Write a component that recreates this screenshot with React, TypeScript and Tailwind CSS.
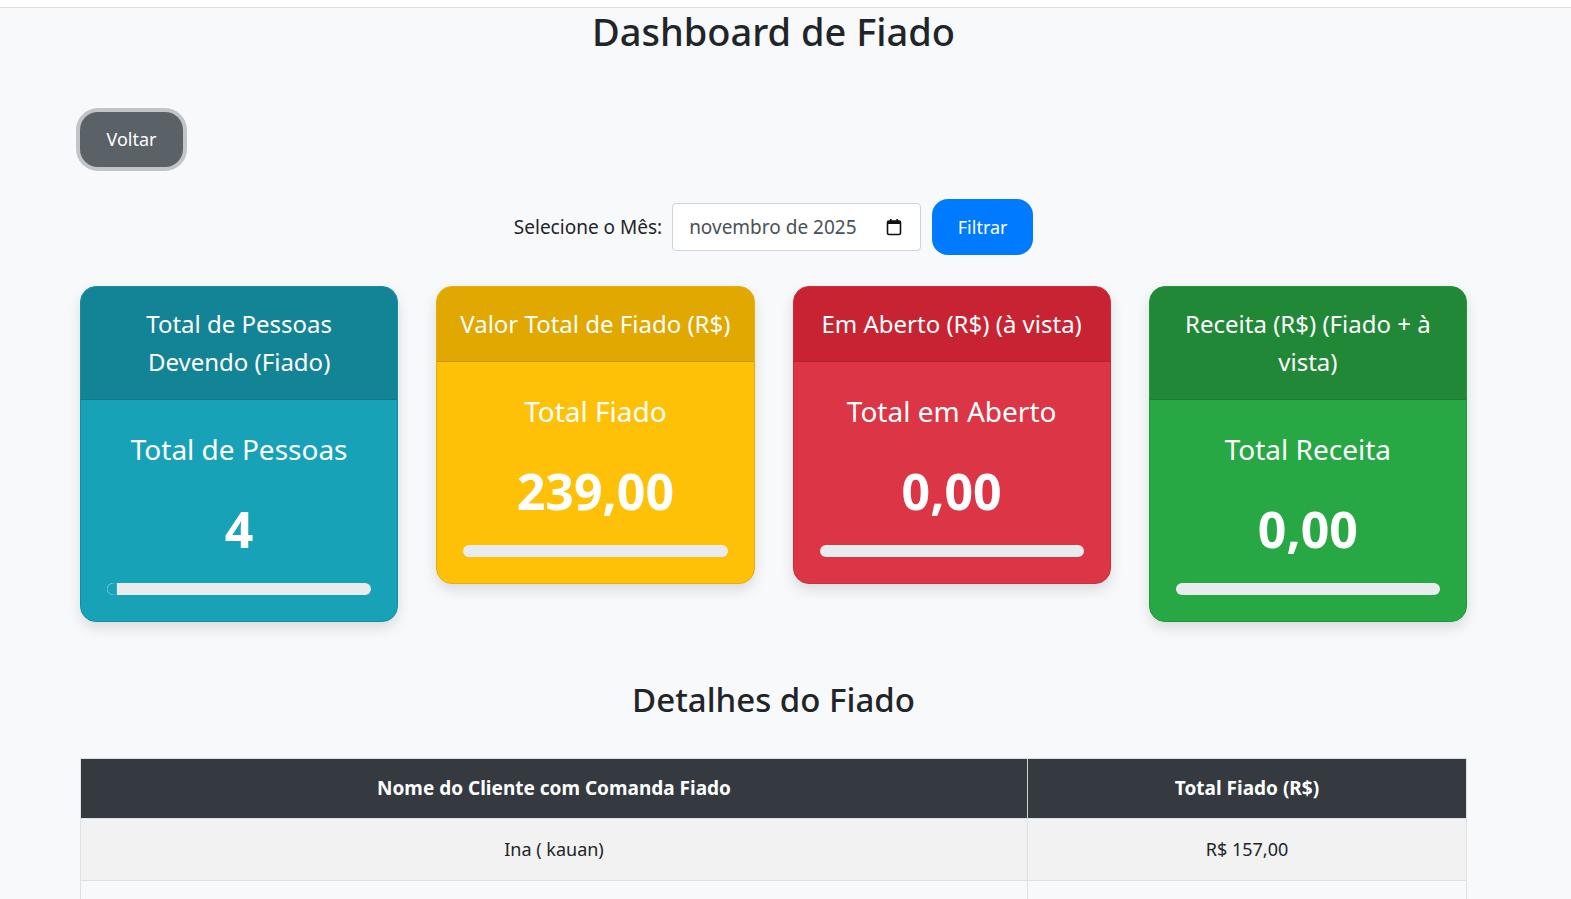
import React from "react";

type Card = {
  header: string;
  title: string;
  value: string;
  headerBg: string;
  bodyBg: string;
  border: string;
  fill?: string;
};

const cards: Card[] = [
  {
    header: "Total de Pessoas Devendo (Fiado)",
    title: "Total de Pessoas",
    value: "4",
    headerBg: "bg-[#138496]",
    bodyBg: "bg-[#17a2b8]",
    border: "border-[#148ea1]",
    fill: "bg-[#17a2b8]",
  },
  {
    header: "Valor Total de Fiado (R$)",
    title: "Total Fiado",
    value: "239,00",
    headerBg: "bg-[#e0a800]",
    bodyBg: "bg-[#ffc107]",
    border: "border-[#e6ad06]",
  },
  {
    header: "Em Aberto (R$) (à vista)",
    title: "Total em Aberto",
    value: "0,00",
    headerBg: "bg-[#c82333]",
    bodyBg: "bg-[#dc3545]",
    border: "border-[#cc2f3f]",
  },
  {
    header: "Receita (R$) (Fiado + à vista)",
    title: "Total Receita",
    value: "0,00",
    headerBg: "bg-[#218838]",
    bodyBg: "bg-[#28a745]",
    border: "border-[#23953d]",
  },
];

// only the first row is visible in the screenshot; the second starts at the fold
const rows = [{ nome: "Ina ( kauan)", total: "R$ 157,00" }];

function CalendarIcon() {
  return (
    <svg width="16" height="18" viewBox="0 0 16 18" fill="none">
      <rect x="1.5" y="3" width="13" height="13.5" rx="1.5" stroke="#111" strokeWidth="1.6" />
      <rect x="1.5" y="3" width="13" height="3" fill="#111" />
      <rect x="4" y="1" width="1.6" height="3" fill="#111" />
      <rect x="10.4" y="1" width="1.6" height="3" fill="#111" />
    </svg>
  );
}

function StatCard({ card }: { card: Card }) {
  return (
    <div
      className={`rounded-[16px] overflow-hidden border ${card.border} ${card.bodyBg} text-white shadow-[0_6px_14px_rgba(0,0,0,0.12)]`}
    >
      <div
        className={`${card.headerBg} px-5 py-[18px] text-center text-[24px] leading-[38px] border-b border-black/10`}
      >
        {card.header}
      </div>
      <div className="px-[26px] pt-[26px] pb-[26px] text-center">
        <div className="text-[28px] leading-[46px]">{card.title}</div>
        <div className="mt-[26px] text-[50px] leading-[62px] font-bold">{card.value}</div>
        <div className="mt-[23px] h-3 rounded-full bg-[#e9ecef] overflow-hidden flex">
          {card.fill && <div className={`w-[10px] h-full ${card.fill} rounded-l-full border border-[#5bc0d0]/40`} />}
        </div>
      </div>
    </div>
  );
}

export default function App() {
  return (
    <div
      className="min-h-screen bg-[#f8f9fa] text-[#212529]"
      style={{ fontFamily: '"Noto Sans", "Open Sans", sans-serif' }}
    >
      <div className="h-[8px] bg-white border-b border-[#dedede]" />
      <div className="ml-[80px] w-[1387px] pb-10">
        <h1 className="text-center text-[38px] leading-[46px] font-medium">Dashboard de Fiado</h1>

        <div className="mt-[58px]">
          <button className="w-[103px] h-[55px] rounded-[18px] bg-[#5a6268] text-white text-[18px] ring-4 ring-[#c2c4c8]">
            Voltar
          </button>
        </div>

        <div className="mt-[32px] flex items-center justify-center h-[56px]">
          <span className="text-[19px] mr-[10px]">Selecione o Mês:</span>
          <div className="w-[249px] h-[48px] bg-white border border-[#ced4da] rounded-[4px] flex items-center justify-between pl-[16px] pr-[18px]">
            <span className="text-[19px] text-[#495057]">novembro de 2025</span>
            <CalendarIcon />
          </div>
          <button className="ml-[11px] w-[101px] h-[56px] rounded-[16px] bg-[#007bff] text-white text-[18px]">
            Filtrar
          </button>
        </div>

        <div className="mt-[31px] grid grid-cols-4 gap-[38px] items-start">
          {cards.map((c) => (
            <StatCard key={c.title} card={c} />
          ))}
        </div>

        <h2 className="mt-[59px] text-center text-[33px] leading-[38px] font-medium">Detalhes do Fiado</h2>

        <table className="mt-[39px] w-full border-collapse border border-[#dee2e6] text-[18px]">
          <thead>
            <tr className="bg-[#343a40] text-white text-[19px]">
              <th className="w-[947px] h-[60px] font-bold border-r border-[#d0d3d6]">Nome do Cliente com Comanda Fiado</th>
              <th className="h-[60px] font-bold">Total Fiado (R$)</th>
            </tr>
          </thead>
          <tbody>
            {rows.map((r) => (
              <tr key={r.nome} className="bg-[#f2f2f2]">
                <td className="h-[62px] text-center border-t border-r border-[#dee2e6]">{r.nome}</td>
                <td className="h-[62px] text-center border-t border-[#dee2e6]">{r.total}</td>
              </tr>
            ))}
            <tr className="bg-[#f8f9fa]">
              <td className="h-[62px] border-t border-r border-[#dee2e6]" />
              <td className="h-[62px] border-t border-[#dee2e6]" />
            </tr>
          </tbody>
        </table>
      </div>
    </div>
  );
}
